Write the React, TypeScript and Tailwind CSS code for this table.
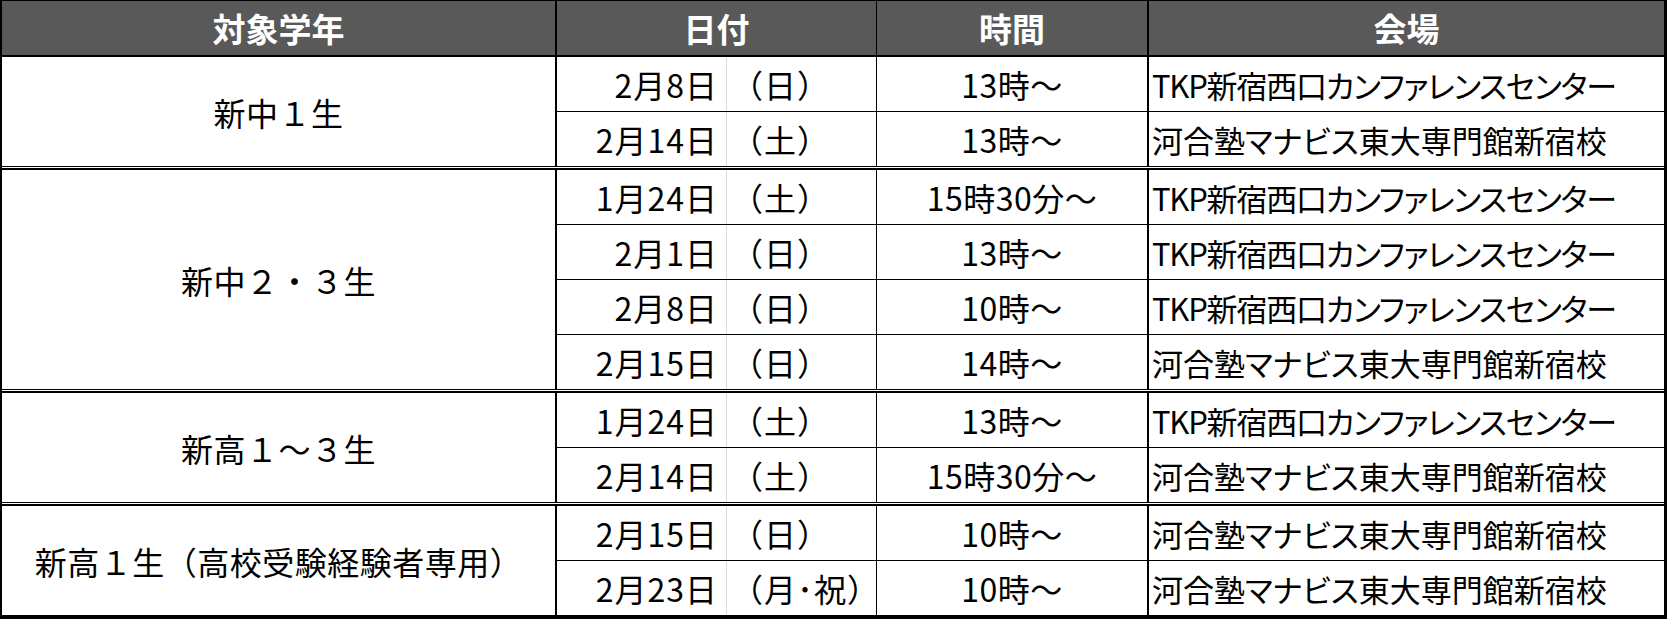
const groups = [
  {
    label: '新中１生',
    rows: [
      { date: '2月8日', day: '（日）', time: '13時～', venue: 'TKP新宿西口カンファレンスセンター' },
      { date: '2月14日', day: '（土）', time: '13時～', venue: '河合塾マナビス東大専門館新宿校' },
    ],
  },
  {
    label: '新中２・３生',
    rows: [
      { date: '1月24日', day: '（土）', time: '15時30分～', venue: 'TKP新宿西口カンファレンスセンター' },
      { date: '2月1日', day: '（日）', time: '13時～', venue: 'TKP新宿西口カンファレンスセンター' },
      { date: '2月8日', day: '（日）', time: '10時～', venue: 'TKP新宿西口カンファレンスセンター' },
      { date: '2月15日', day: '（日）', time: '14時～', venue: '河合塾マナビス東大専門館新宿校' },
    ],
  },
  {
    label: '新高１～３生',
    rows: [
      { date: '1月24日', day: '（土）', time: '13時～', venue: 'TKP新宿西口カンファレンスセンター' },
      { date: '2月14日', day: '（土）', time: '15時30分～', venue: '河合塾マナビス東大専門館新宿校' },
    ],
  },
  {
    label: '新高１生（高校受験経験者専用）',
    rows: [
      { date: '2月15日', day: '（日）', time: '10時～', venue: '河合塾マナビス東大専門館新宿校' },
      { date: '2月23日', day: '（月･祝）', time: '10時～', venue: '河合塾マナビス東大専門館新宿校' },
    ],
  },
];

function GroupSeparator() {
  return <div className="h-[4px] bg-white border-t border-b-2 border-black" />;
}

export default function App() {
  return (
    <div
      className="bg-white w-[1669px] h-[622px] text-black text-[32px] leading-none whitespace-nowrap"
      style={{ fontFamily: '"Noto Sans CJK JP", "Noto Sans", sans-serif' }}
    >
      <div className="w-[1667px] border-l-2 border-t border-r-[3px] border-b-[4px] border-black">
        {/* header */}
        <div className="flex h-[56px] bg-[#595959] border-b-2 border-black text-white font-bold text-[33px]">
          <div className="w-[555px] border-r-2 border-black flex items-center justify-center">対象学年</div>
          <div className="w-[320px] border-r border-black flex items-center justify-center">日付</div>
          <div className="w-[272px] border-r-2 border-black flex items-center justify-center">時間</div>
          <div className="flex-1 flex items-center justify-center">会場</div>
        </div>

        {groups.map((g, gi) => (
          <div key={gi}>
            {gi > 0 && <GroupSeparator />}
            <div className="flex">
              <div className="w-[555px] border-r-2 border-black flex items-center justify-center tracking-[0.5px]">
                {g.label}
              </div>
              <div className="flex-1">
                {g.rows.map((r, ri) => (
                  <div
                    key={ri}
                    className={`flex ${ri > 0 ? 'h-[55px] border-t border-black' : 'h-[54px]'}`}
                  >
                    <div className="w-[170px] border-r border-[#d9d9d9] flex items-center justify-end pr-[8px] tracking-[1px]">
                      {r.date}
                    </div>
                    <div className="w-[150px] border-r border-black flex items-center pl-[4px] tracking-[1px]">
                      {r.day}
                    </div>
                    <div className="w-[272px] border-r-2 border-black flex items-center justify-center tracking-[0.5px]">
                      {r.time}
                    </div>
                    <div
                      className={`flex-1 flex items-center pl-[3px] text-[31px] [font-feature-settings:'palt'] ${
                        r.venue.startsWith('TKP') ? 'tracking-[-1.2px]' : ''
                      }`}
                    >
                      {r.venue}
                    </div>
                  </div>
                ))}
              </div>
            </div>
          </div>
        ))}
      </div>
    </div>
  );
}
